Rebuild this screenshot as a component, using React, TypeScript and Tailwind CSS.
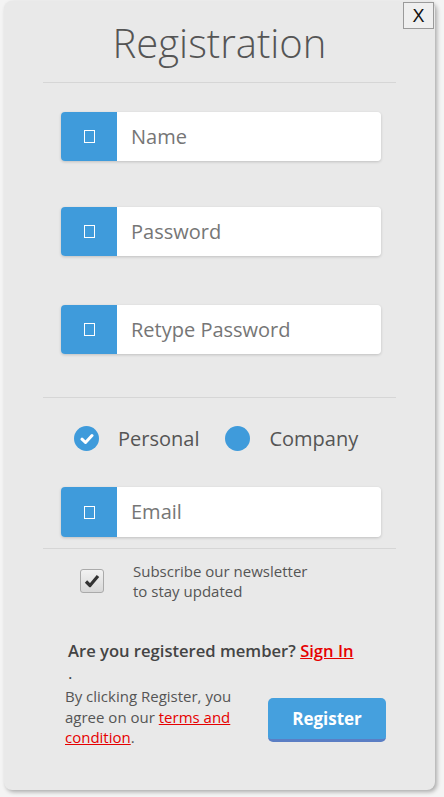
import type { ReactNode } from 'react';

const font = { fontFamily: '"Open Sans", "Liberation Sans", sans-serif' };

function BoxIcon() {
	return <span className="block w-[11px] h-[13px] border border-white" />;
}

function InputRow({ placeholder, className = '' }: { placeholder: string; className?: string }) {
	return (
		<div className={`flex ml-[57px] w-[320px] h-[49px] rounded shadow-[0_1px_3px_rgba(0,0,0,0.18)] ${className}`}>
			<div className="w-[56px] flex items-center justify-center bg-[#3f9bdb] rounded-l">
				<BoxIcon />
			</div>
			<div className="flex-1 flex items-center pl-[14px] bg-white rounded-r text-[20px] text-[#767676]">{placeholder}</div>
		</div>
	);
}

function Divider({ className = '' }: { className?: string }) {
	return <div className={`mx-[39px] h-px bg-[#d6d6d6] ${className}`} />;
}

function Radio({ checked, children }: { checked?: boolean; children: ReactNode }) {
	return (
		<div className="flex items-center">
			<span className="w-[25px] h-[25px] rounded-full bg-[#3f9bdb] flex items-center justify-center">
				{checked && (
					<svg width="14" height="12" viewBox="0 0 14 12">
						<path d="M2 6.2 L5.5 9.5 L12 2.5" stroke="white" strokeWidth="3" fill="none" strokeLinecap="round" strokeLinejoin="round" />
					</svg>
				)}
			</span>
			<span className="ml-[19px] text-[20px] text-[#555]">{children}</span>
		</div>
	);
}

export default function App() {
	return (
		<div className="w-[444px] h-[797px] bg-[#f4f4f4] pt-px" style={font}>
			<div className="relative ml-[4px] w-[431px] h-[789px] rounded-lg bg-[#e9e9e9] shadow-[2px_2px_4px_rgba(0,0,0,0.3)]">
				<button className="absolute top-px right-px w-[31px] h-[27px] bg-[#efefef] border border-[#9a9a9a] text-[18px] leading-none text-[#111]" style={{ fontFamily: '"Liberation Sans", sans-serif' }}>
					X
				</button>

				<h1 className="pt-[15px] text-center text-[40px] leading-[54px] font-light text-[#555]">Registration</h1>
				<Divider className="mt-[12px]" />

				<InputRow placeholder="Name" className="mt-[29px]" />
				<InputRow placeholder="Password" className="mt-[46px]" />
				<InputRow placeholder="Retype Password" className="mt-[49px]" />

				<Divider className="mt-[43px]" />

				<div className="mt-[28px] ml-[70px] flex items-center h-[25px]">
					<Radio checked>Personal</Radio>
					<div className="ml-[26px]">
						<Radio>Company</Radio>
					</div>
				</div>

				<InputRow placeholder="Email" className="mt-[36px] h-[50px]" />
				<Divider className="mt-[11px]" />

				<div className="mt-[12px] flex items-center">
					<span className="ml-[76px] w-[24px] h-[24px] rounded-[3px] border border-[#aaa] bg-gradient-to-b from-[#f2f2f2] to-[#d8d8d8] flex items-center justify-center">
						<svg width="16" height="14" viewBox="0 0 16 14">
							<path d="M2 7.5 L6 11.5 L14 2" stroke="#333" strokeWidth="3.2" fill="none" strokeLinejoin="round" />
						</svg>
					</span>
					<p className="ml-[29px] text-[15px] leading-[20px] text-[#555]">
						Subscribe our newsletter
						<br />
						to stay updated
					</p>
				</div>

				<p className="mt-[39px] ml-[64px] text-[16.6px] leading-[22px] font-semibold text-[#444]">
					Are you registered member?{' '}
					<a href="#" className="text-[#e60000] underline">
						Sign In
					</a>
				</p>
				<p className="ml-[64px] text-[17px] leading-[22px] text-[#444]">.</p>

				<div className="flex items-start">
					<p className="mt-[2px] ml-[61px] w-[180px] text-[15px] leading-[20.5px] text-[#555]">
						By clicking Register, you
						<br />
						agree on our{' '}
						<a href="#" className="text-[#e60000] underline">
							terms and
							<br />
							condition
						</a>
						.
					</p>
					<button className="mt-[14px] ml-[23px] w-[118px] h-[44px] rounded-[5px] bg-[#45a0de] border-b-[3px] border-[#5b7ec4] text-white text-[17px] font-bold">
						Register
					</button>
				</div>
			</div>
		</div>
	);
}
